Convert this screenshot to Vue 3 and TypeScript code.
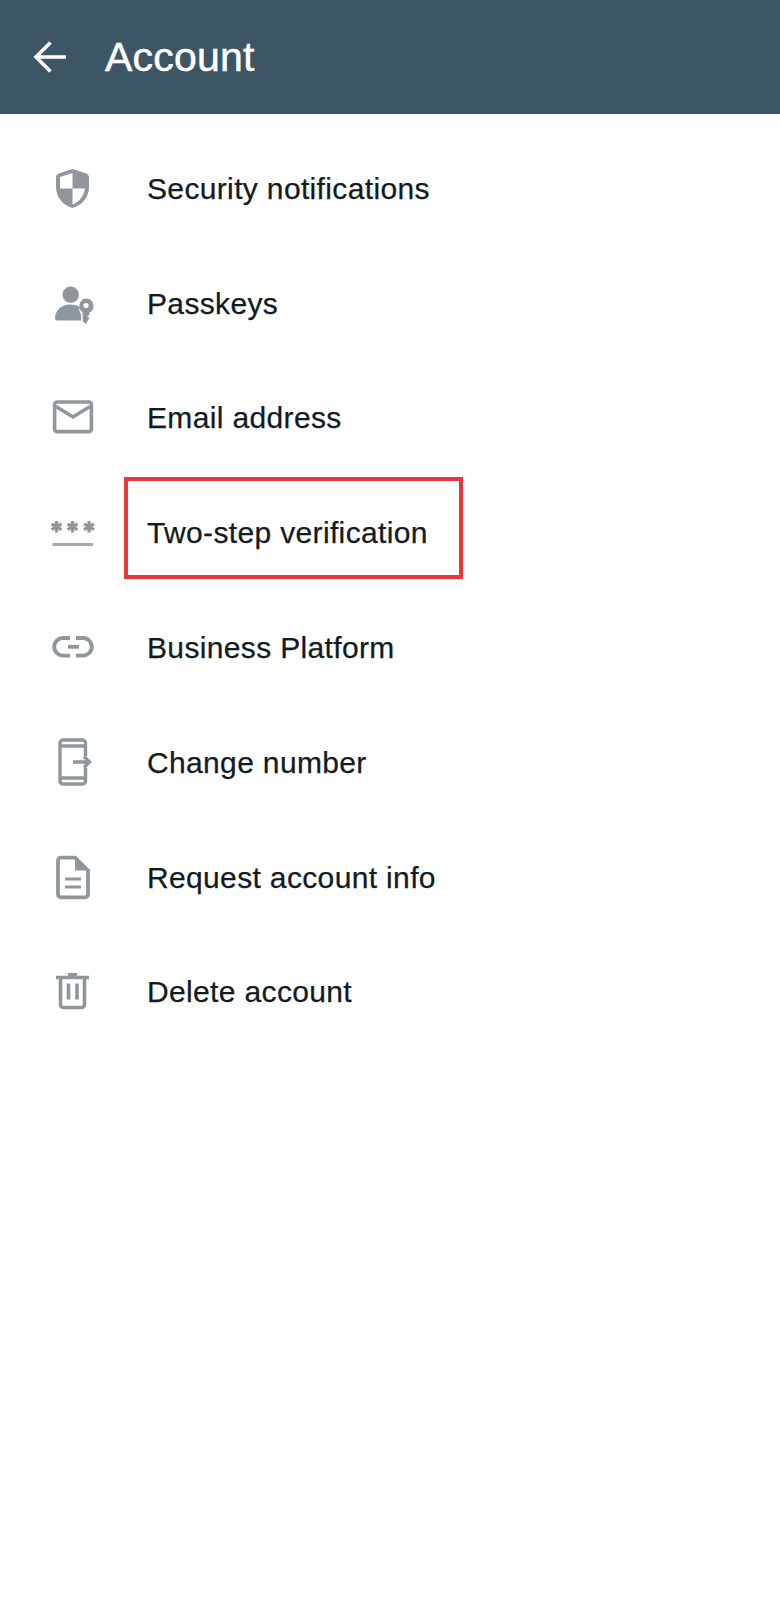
<script setup lang="ts">
const rows: { key: string; label: string; boxed?: boolean }[] = [
  { key: 'shield', label: 'Security notifications' },
  { key: 'passkey', label: 'Passkeys' },
  { key: 'mail', label: 'Email address' },
  { key: 'pin', label: 'Two-step verification', boxed: true },
  { key: 'link', label: 'Business Platform' },
  { key: 'phone', label: 'Change number' },
  { key: 'doc', label: 'Request account info' },
  { key: 'trash', label: 'Delete account' },
]
</script>

<template>
  <div class="page">
    <header class="bar">
      <svg class="back" width="36" height="36" viewBox="0 0 36 36" fill="none" stroke="#fff" stroke-width="3.6">
        <path d="M34 18H4.500M18.500 3.500 4 18l14.500 14.500" />
      </svg>
      <h1 class="title">Account</h1>
    </header>
    <ul class="list">
      <li v-for="r in rows" :key="r.key" class="row">
        <svg class="icon" width="48" height="48" viewBox="0 0 48 48">
          <g v-if="r.key === 'shield'" fill="#8f979d">
            <path fill-rule="evenodd" d="M23.500 4 9.500 8.500 7 11v11c0 10 7 18.500 16.500 21C33 40.500 40 32 40 22V11l-2.500-2.500L23.500 4Zm0 19.500H36c-1 7-5.500 13.500-12.500 16V23.500H11V12l12.500-4.100v15.600Z" />
          </g>
          <g v-else-if="r.key === 'passkey'" fill="#8f979d">
            <circle cx="21.700" cy="14.800" r="8.200" />
            <path d="M6 38.500c0-8 6.500-14 15-14 3.500 0 7 .8 9.500 2.300-.5 3.500 0 6 1.500 7.500v6.200H8a2 2 0 0 1-2-2Z" />
            <path fill-rule="evenodd" d="M37 18.500a7.500 7.500 0 0 1 3.300 14.200V35l-2 1.500 2 1.500-3.300 6-3.300-2.500v-9.300A7.500 7.500 0 0 1 37 18.500Zm0 4.500a2.600 2.600 0 1 0 0 5.200 2.600 2.600 0 0 0 0-5.200Z" />
          </g>
          <g v-else-if="r.key === 'mail'" fill="none" stroke="#8f979d" stroke-width="3.600">
            <rect x="5.600" y="8" width="36.800" height="29.600" rx="2.500" />
            <path d="M7 12.500 24 23l17-10.500" />
          </g>
          <g v-else-if="r.key === 'pin'" fill="none" stroke="#8f979d">
            <g stroke-width="3.200">
              <path d="M7.500 12v11.500M2.500 14.800l10 5.900M2.500 20.700l10-5.900" />
              <path d="M23.500 12v11.500M18.500 14.800l10 5.900M18.500 20.700l10-5.900" />
              <path d="M40 12v11.500M35 14.800l10 5.900M35 20.700l10-5.900" />
            </g>
            <path stroke="#a3a9ae" stroke-width="3" d="M3.500 35.500H44" />
          </g>
          <g v-else-if="r.key === 'link'" fill="none" stroke="#8f979d" stroke-width="3.800">
            <path d="M21 14h-7a8.800 8.800 0 0 0 0 17.600h7" />
            <path d="M27 14h7a8.800 8.800 0 0 1 0 17.600h-7" />
            <path d="M19 22.800h11" />
          </g>
          <g v-else-if="r.key === 'phone'" fill="none" stroke="#8f979d" stroke-width="3.400">
            <path d="M36.500 17V4a3 3 0 0 0-3-3H14a3 3 0 0 0-3 3v38a3 3 0 0 0 3 3h19.500a3 3 0 0 0 3-3V29" />
            <path d="M11 7h25M11 39h25" />
            <path d="M24 23h16M35 17.500l5.500 5.500-5.500 5.500" />
          </g>
          <g v-else-if="r.key === 'doc'">
            <path fill="none" stroke="#8f979d" stroke-width="3.800" stroke-linejoin="round" d="M26 3.700H12a3 3 0 0 0-3 3v33.600a3 3 0 0 0 3 3h24a3 3 0 0 0 3-3V16.500L26 3.700Z" />
            <path fill="#8f979d" d="M26 3.700V16.500h13L26 3.700Z" />
            <path fill="none" stroke="#8f979d" stroke-width="3" d="M16 25h16M16 33h16" />
          </g>
          <g v-else fill="none" stroke="#8f979d" stroke-width="3.600">
            <path d="M7 9.500h33" />
            <path stroke-width="3" d="M19 6.500h9" />
            <path d="M11.500 9.500v27a3 3 0 0 0 3 3h18a3 3 0 0 0 3-3v-27" />
            <path d="M19.500 15.500v16M28 15.500v16" />
          </g>
        </svg>
        <span class="label">{{ r.label }}</span>
        <span v-if="r.boxed" class="mark"></span>
      </li>
    </ul>
  </div>
</template>

<style>
html, body { margin: 0; background: #fff; }
</style>

<style scoped>
.page {
  width: 780px;
  height: 1600px;
  background: #fff;
  font-family: "Liberation Sans", Arial, sans-serif;
  overflow: hidden;
}
.bar {
  height: 114px;
  background: #3d5665;
  display: flex;
  align-items: center;
  padding-left: 32px;
  box-sizing: border-box;
}
.back { flex: none; }
.title {
  margin: 0 0 0 37px;
  color: #fff;
  font-size: 41px;
  font-weight: 400;
  letter-spacing: 0.2px;
  -webkit-text-stroke: 0.5px #fff;
}
.list {
  list-style: none;
  margin: 0;
  padding: 17.4px 0 0;
}
.row {
  position: relative;
  height: 114.8px;
  display: flex;
  align-items: center;
  padding-left: 49px;
}
.icon { flex: none; overflow: visible; }
.label {
  margin-left: 50px;
  font-size: 30px;
  letter-spacing: 0.35px;
  color: #111b21;
  -webkit-text-stroke: 0.25px #111b21;
}
.mark {
  position: absolute;
  left: 124px;
  top: 1.2px;
  width: 339px;
  height: 102px;
  box-sizing: border-box;
  border: 4px solid #e8373d;
}
</style>
